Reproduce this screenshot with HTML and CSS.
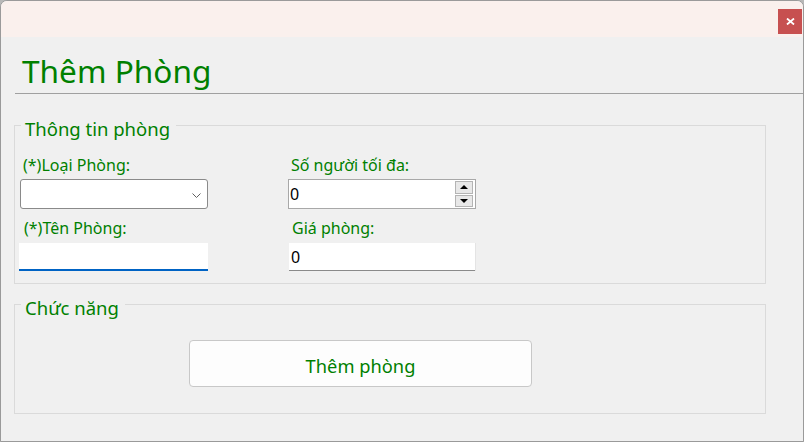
FILE: index.html
```html
<!DOCTYPE html>
<html lang="vi">
<head>
<meta charset="utf-8">
<title>Thêm Phòng</title>
<link rel="stylesheet" href="styles.css">
</head>
<body>
<div class="window">
  <div class="titlebar">
    <button class="close" aria-label="Close">
      <svg width="9" height="7" viewBox="0 0 9 7"><path d="M1 0.5 L8 6.5 M8 0.5 L1 6.5" stroke="#fff" stroke-width="1.8" fill="none"/></svg>
    </button>
  </div>
  <div class="content">
    <h1 class="heading">Thêm Phòng</h1>
    <div class="rule"></div>

    <fieldset class="group info">
      <legend class="group-title">Thông tin phòng</legend>
      <div class="form-grid">
        <div class="field">
          <label class="field-label">(*)Loại Phòng:</label>
          <div class="combo">
            <svg class="chevron" width="9" height="5" viewBox="0 0 9 5"><path d="M0.5 0.5 L4.5 4.5 L8.5 0.5" stroke="#606060" stroke-width="1" fill="none"/></svg>
          </div>
        </div>
        <div class="field">
          <label class="field-label">Số người tối đa:</label>
          <div class="spin">
            <span class="value">0</span>
            <div class="spin-btns">
              <span class="spin-btn"><span class="arrow-up"></span></span>
              <span class="spin-btn"><span class="arrow-down"></span></span>
            </div>
          </div>
        </div>
        <div class="field row2">
          <label class="field-label">(*)Tên Phòng:</label>
          <div class="textbox active"></div>
        </div>
        <div class="field row2">
          <label class="field-label">Giá phòng:</label>
          <div class="textbox price"><span class="value">0</span></div>
        </div>
      </div>
    </fieldset>

    <fieldset class="group actions">
      <legend class="group-title">Chức năng</legend>
      <button class="primary">Thêm phòng</button>
    </fieldset>
  </div>
</div>
</body>
</html>
```
FILE: styles.css
```css
html, body {
  margin: 0;
  padding: 0;
  background: #b8b8b8;
}
body {
  font-family: "Noto Sans", "Open Sans", sans-serif;
}
.window {
  width: 804px;
  height: 442px;
  box-sizing: border-box;
  border: 1px solid #9a9a9a;
  border-radius: 7px 7px 0 0;
  background: #f0f0f0;
  overflow: hidden;
  display: flex;
  flex-direction: column;
}
.titlebar {
  height: 36px;
  background: #faf0ed;
  display: flex;
  justify-content: flex-end;
  align-items: flex-start;
  padding: 8px 1px 0 0;
  box-sizing: border-box;
  flex: none;
}
.close {
  width: 24px;
  height: 25px;
  border: none;
  margin: 0;
  padding: 0;
  background: #c75050;
  display: flex;
  align-items: center;
  justify-content: center;
}
.content {
  flex: 1;
  padding: 0 0 0 13px;
}
.heading {
  margin: 16px 0 0 8px;
  font-weight: normal;
  font-size: 31.6px;
  line-height: 36px;
  color: #008000;
}
.rule {
  margin: 4px 0 0 1px;
  height: 0;
  border-top: 1px solid #a0a0a0;
}
.group {
  margin: 16px 0 0 0;
  width: 752px;
  box-sizing: border-box;
  border: 1px solid #dadada;
  padding: 0 0 0 5px;
  min-width: 0;
}
.group-title {
  color: #008000;
  font-size: 18.5px;
  line-height: 22px;
  padding: 8px 6px 0 4px;
  margin: 0 0 0 1px;
}
.info {
  padding-top: 15px;
  padding-bottom: 12px;
}
.form-grid {
  display: grid;
  grid-template-columns: 188px 188px;
  column-gap: 80px;
  row-gap: 9px;
}
.field {
  display: flex;
  flex-direction: column;
}
.field-label {
  color: #008000;
  font-size: 16px;
  line-height: 20px;
  padding-left: 3px;
  margin-bottom: 4px;
}
.row2 .field-label {
  margin-bottom: 5px;
  padding-left: 4px;
}
.combo {
  height: 30px;
  box-sizing: border-box;
  background: #fff;
  border: 1px solid #8a8a8a;
  border-radius: 3px;
  display: flex;
  align-items: center;
  justify-content: flex-end;
  padding-right: 6px;
}
.chevron { margin-top: 2px; }
.spin {
  height: 30px;
  box-sizing: border-box;
  background: #fff;
  border: 1px solid #a8a8a8;
  display: flex;
  align-items: center;
  justify-content: space-between;
  padding: 1px 1px 1px 1px;
}
.value {
  font-family: "Noto Sans", sans-serif;
  font-size: 16px;
  color: #000;
}
.spin-btns {
  display: flex;
  flex-direction: column;
  height: 26px;
  width: 18px;
  gap: 1px;
  margin-right: 1px;
}
.spin-btn {
  flex: 1;
  background: #e8e8e8;
  border: 1px solid #b4b4b4;
  display: flex;
  align-items: center;
  justify-content: center;
}
.arrow-up {
  width: 0; height: 0;
  border-left: 4px solid transparent;
  border-right: 4px solid transparent;
  border-bottom: 4px solid #000;
}
.arrow-down {
  width: 0; height: 0;
  border-left: 4px solid transparent;
  border-right: 4px solid transparent;
  border-top: 4px solid #000;
}
.textbox {
  height: 28px;
  box-sizing: border-box;
  background: #fff;
  display: flex;
  align-items: center;
  padding-left: 2px;
}
.textbox.active {
  margin-left: -1px;
  border-bottom: 2px solid #0063c4;
}
.textbox.price {
  margin-left: 1px;
  width: 186px;
  border-bottom: 1px solid #8a8a8a;
  box-shadow: 1px 0 0 #e4e4e4;
}
.actions {
  margin-top: 5px;
  padding-bottom: 26px;
}
.primary {
  margin: 21px 0 0 169px;
  display: block;
  width: 343px;
  height: 47px;
  background: #fdfdfd;
  border: 1px solid #c8c8c8;
  border-radius: 4px;
  font-family: "Noto Sans", sans-serif;
  font-size: 18.3px;
  color: #008000;
  padding: 3px 0 0 0;
}
```
